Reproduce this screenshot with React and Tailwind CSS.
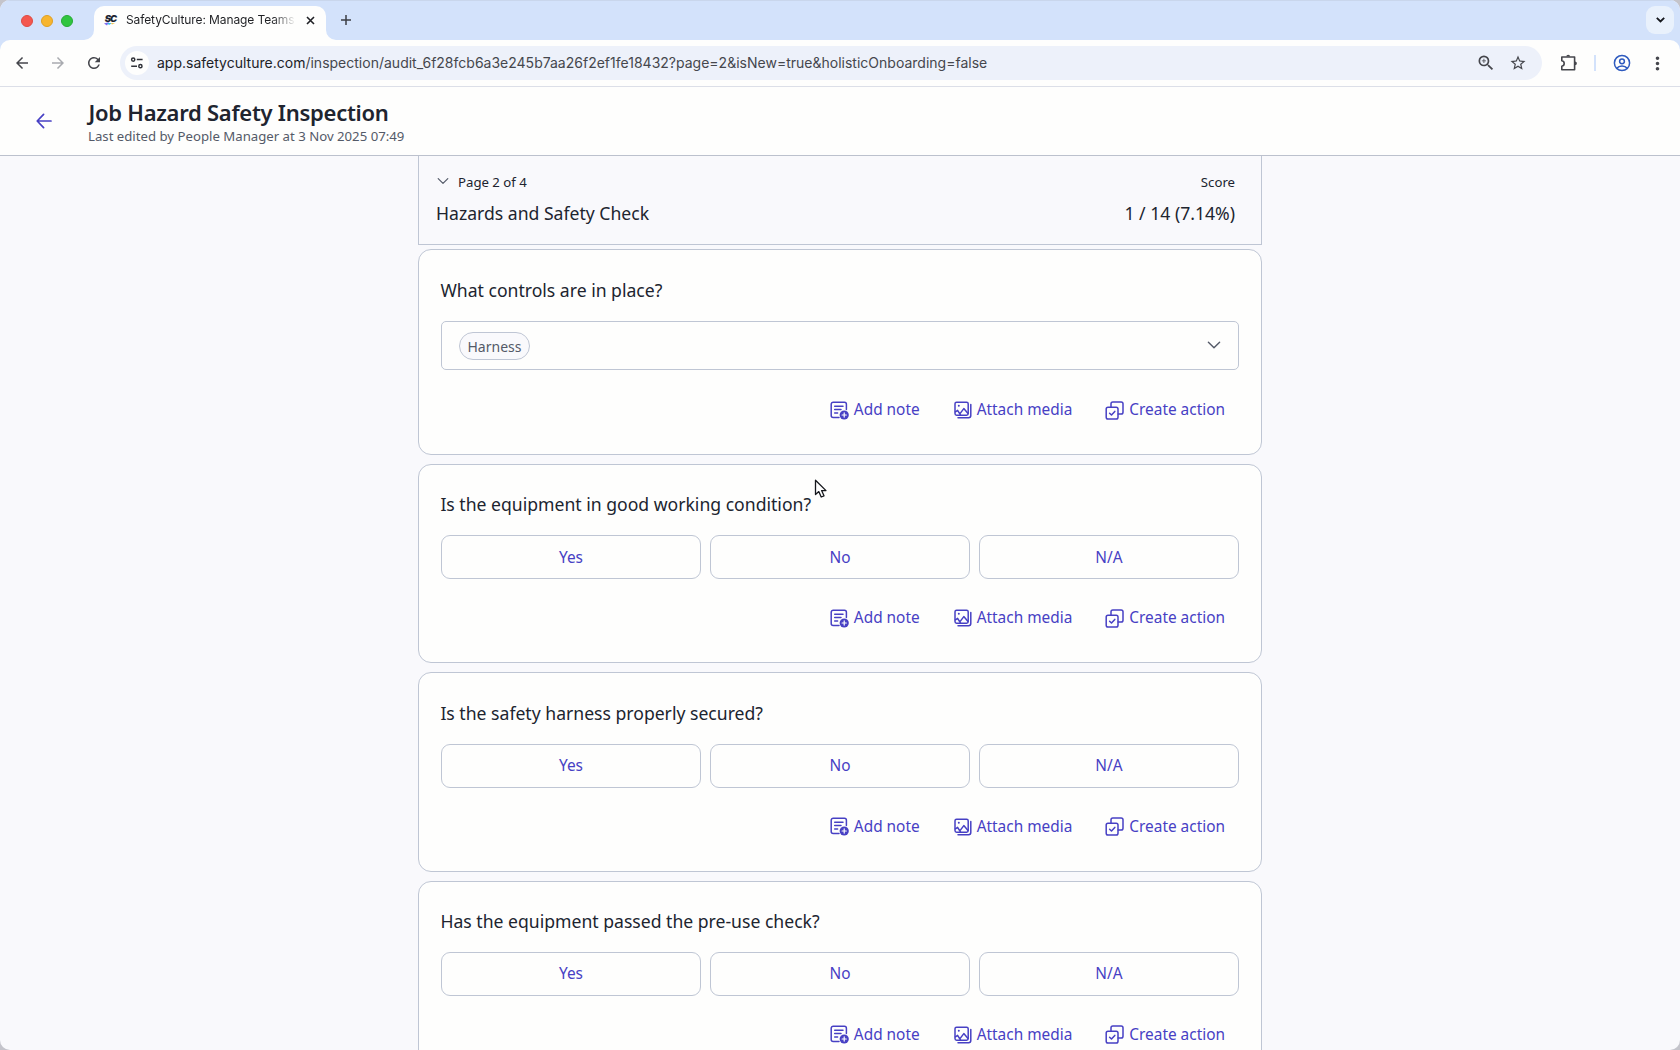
import { MdArrowBack, MdArrowForward, MdRefresh, MdZoomIn, MdStarBorder, MdMoreVert } from "react-icons/md";

const questions = [
  { title: "Is the equipment in good working condition?" },
  { title: "Is the safety harness properly secured?" },
  { title: "Has the equipment passed the pre-use check?" },
];

const TuneIcon = () => (
  <svg className="w-3.5 h-3.5" viewBox="0 0 14 14" fill="none" stroke="#303238" strokeWidth="1.5">
    <circle cx="3.2" cy="3.6" r="1.6" />
    <path d="M6.8 3.6H12.6M1.2 10.2H7" />
    <circle cx="10.4" cy="10.2" r="1.6" />
  </svg>
);

const PuzzleIcon = () => (
  <svg className="w-[18px] h-[18px]" viewBox="0 0 18 18" fill="none">
    <path
      d="M1.8 3H14.6V15.7H1.8V12.2C3.2 12 4.2 10.9 4.2 9.5C4.2 8.1 3.2 7 1.8 6.8Z"
      stroke="#45464c"
      strokeWidth="1.6"
      strokeLinejoin="round"
    />
    <path d="M6.3 2.6a1.9 1.9 0 0 1 3.8 0zM15 7.4a1.9 1.9 0 0 1 0 3.8z" fill="#45464c" />
  </svg>
);

const ProfileIcon = () => (
  <svg className="w-[18px] h-[18px]" viewBox="0 0 18 18" fill="none" stroke="#2f5bbf" strokeWidth="1.5">
    <circle cx="9" cy="9" r="7.6" />
    <circle cx="9" cy="7.3" r="2.4" />
    <path d="M3.8 14.2C5 12.6 6.9 11.9 9 11.9s4 .7 5.2 2.3" />
  </svg>
);

const NoteIcon = () => (
  <svg className="w-[19px] h-[19px]" viewBox="0 0 19 19" fill="none" stroke="currentColor" strokeWidth="1.5" strokeLinecap="round">
    <path d="M9 16.4H3.2A2 2 0 0 1 1.2 14.4V3.2A2 2 0 0 1 3.2 1.2H14.4A2 2 0 0 1 16.4 3.2V8.6" />
    <path d="M4.7 5.2H13M4.7 8.6H11M4.7 12H7.6" />
    <circle cx="14.2" cy="14" r="4.6" fill="currentColor" stroke="none" />
    <path d="M14.2 11.9V16.1M12.1 14H16.3" stroke="#fefefd" strokeWidth="1.2" />
  </svg>
);

const MediaIcon = () => (
  <svg className="w-[18px] h-[18px]" viewBox="0 0 18 18" fill="none" stroke="currentColor" strokeWidth="1.5" strokeLinecap="round" strokeLinejoin="round">
    <rect x="1" y="1.2" width="13.2" height="13" rx="1.6" />
    <path d="M1.4 10.8L3.6 9.4L6.4 13.8M6.2 12.4L9.8 7.6L14 12.4" />
    <circle cx="4.8" cy="4.8" r="1" fill="currentColor" stroke="none" />
    <path d="M16.8 3.4V14.6A2.2 2.2 0 0 1 14.6 16.8H4" />
  </svg>
);

const ActionIcon = () => (
  <svg className="w-[19px] h-[19px]" viewBox="0 0 19 19" fill="none" stroke="currentColor" strokeWidth="1.5" strokeLinecap="round" strokeLinejoin="round">
    <rect x="1.2" y="6.2" width="11.8" height="11.8" rx="1.8" />
    <path d="M6 6V2.8A1.8 1.8 0 0 1 7.8 1H16.2A1.8 1.8 0 0 1 18 2.8V11.2A1.8 1.8 0 0 1 16.2 13H13.2" />
    <path d="M4.6 12.2L6.5 14L9.8 10.4" />
  </svg>
);

const Chevron = ({ className }) => (
  <svg className={className} viewBox="0 0 14 8" fill="none" stroke="currentColor" strokeWidth="1.4" strokeLinecap="round" strokeLinejoin="round">
    <path d="M1.4 1.2L7 6.8L12.6 1.2" />
  </svg>
);

const TabStrip = () => (
  <div className="flex h-10 bg-[#d3e2fb] border-t border-[#c9d6ec]">
    <div className="flex items-center gap-2 pl-[21px] w-[94px]">
      <span className="w-3 h-3 rounded-full bg-[#f4574f] border border-[#de4b44]" />
      <span className="w-3 h-3 rounded-full bg-[#f7b52f] border border-[#dfa023]" />
      <span className="w-3 h-3 rounded-full bg-[#30c540] border border-[#27ab35]" />
    </div>
    <div className="relative mt-[5px] h-[34px] w-[232px] bg-[#fefefd] rounded-t-[10px] flex items-center pl-[9px] pr-[9px] pb-[6px]">
      <svg className="absolute bottom-0 -left-[10px] w-[10px] h-[10px]" viewBox="0 0 10 10">
        <path d="M10 0V10H0A10 10 0 0 0 10 0Z" fill="#fefefd" />
      </svg>
      <svg className="absolute bottom-0 -right-[10px] w-[10px] h-[10px]" viewBox="0 0 10 10">
        <path d="M0 0V10H10A10 10 0 0 1 0 0Z" fill="#fefefd" />
      </svg>
      <span className="relative w-[15px] h-[14px] shrink-0 flex items-center justify-center">
        <svg className="absolute inset-0 w-[15px] h-[14px]" viewBox="0 0 15 14">
          <path d="M1 10.5L6 9L4 12.5Z" fill="#7d6bf0" />
          <path d="M4 10H9L6 12Z" fill="#36bfe8" />
          <path d="M8 10H12L9 11.6Z" fill="#f3c552" />
        </svg>
        <span className="relative -mt-0.5 text-[9.5px] leading-none font-black italic tracking-[-1px] text-[#1f2533] font-['Inter',sans-serif]">SC</span>
      </span>
      <span className="ml-[8px] w-[170px] shrink-0 whitespace-nowrap text-[12px] leading-4 tracking-[-0.1px] text-[#1f2024] font-['Inter',sans-serif] [mask-image:linear-gradient(to_right,black_86%,transparent_100%)]">
        SafetyCulture: Manage Teams
      </span>
      <svg className="ml-auto mr-[2.5px] w-[9px] h-[9px]" viewBox="0 0 9 9" stroke="#202126" strokeWidth="1.6">
        <path d="M1 1L8 8M8 1L1 8" />
      </svg>
    </div>
    <svg className="ml-[15px] mt-[14px] w-[10px] h-[10px]" viewBox="0 0 10 10" stroke="#3c3e44" strokeWidth="1.5">
      <path d="M5 0V10M0 5H10" />
    </svg>
    <div className="ml-auto mr-[6px] mt-[5px] w-7 h-7 rounded-[9px] bg-[#e9f1fc] flex items-center justify-center">
      <svg className="w-[9px] h-[6px]" viewBox="0 0 9 6" fill="none" stroke="#15171c" strokeWidth="1.8">
        <path d="M0.8 0.8L4.5 4.5L8.2 0.8" />
      </svg>
    </div>
  </div>
);

const Toolbar = () => (
  <div className="bg-[#d3e2fb]">
    <div className="flex items-center h-[47px] bg-[#fefefd] rounded-t-[10px] border-b border-[#dcdfe8]">
      <MdArrowBack className="ml-[13px] w-[18px] h-[18px] text-[#45464c]" />
      <MdArrowForward className="ml-[18px] w-[18px] h-[18px] text-[#a9abb0]" />
      <MdRefresh className="ml-[18px] w-[18px] h-[18px] text-[#45464c]" />
      <div className="ml-[17px] w-[1422px] h-[34px] rounded-full bg-[#edf1fa] flex items-center pl-[5px] pr-[15px]">
        <span className="w-6 h-6 rounded-full bg-[#fefefd] flex items-center justify-center">
          <TuneIcon />
        </span>
        <span className="ml-2 whitespace-nowrap text-[14px] leading-5 tracking-[0.005px] text-[#45474d] font-['Inter',sans-serif]">
          <span className="text-[#202126]">app.safetyculture.com</span>
          /inspection/audit_6f28fcb6a3e245b7aa26f2ef1fe18432?page=2&amp;isNew=true&amp;holisticOnboarding=false
        </span>
        <MdZoomIn className="ml-auto w-5 h-5 text-[#45464c]" />
        <MdStarBorder className="ml-[13px] w-[18px] h-[18px] text-[#45464c]" />
      </div>
      <span className="ml-[18px]"><PuzzleIcon /></span>
      <span className="ml-[16px] w-[2px] h-4 bg-[#d3e2fb]" />
      <span className="ml-[17px]"><ProfileIcon /></span>
      <MdMoreVert className="ml-[16px] w-[21px] h-[21px] text-[#45464c]" />
    </div>
  </div>
);

const PageHeader = () => (
  <div className="flex h-[69px] bg-[#fefefd] border-b border-[#bcc1cd]">
    <svg className="ml-[36px] mt-[26px] w-4 h-4" viewBox="0 0 16 16" fill="none" stroke="#4740c4" strokeWidth="1.7" strokeLinecap="round" strokeLinejoin="round">
      <path d="M15 8H1.4M7.6 1.4L1.2 8L7.6 14.6" />
    </svg>
    <div className="ml-[36px] pt-[11px]">
      <h1 className="ml-[0.5px] text-[22px] leading-7 font-semibold tracking-[-0.27px] text-[#20242f] whitespace-nowrap">Job Hazard Safety Inspection</h1>
      <p className="mt-px text-[13.2px] leading-[18px] text-[#545a68] whitespace-nowrap">Last edited by People Manager at 3 Nov 2025 07:49</p>
    </div>
  </div>
);

const Actions = () => (
  <div className="flex items-center h-6 pr-[14px] justify-end text-[15.4px] leading-6 text-[#4740c4]">
    <button className="flex items-center gap-[5px]">
      <NoteIcon />
      Add note
    </button>
    <button className="ml-[34px] flex items-center gap-[5px]">
      <MediaIcon />
      Attach media
    </button>
    <button className="ml-[33px] flex items-center gap-[5px]">
      <ActionIcon />
      Create action
    </button>
  </div>
);

const Card = ({ title, className, children }) => (
  <div className={`shrink-0 px-[22px] bg-[#fefefd] border border-[#bfc6d4] rounded-[13px] ${className}`}>
    <h3 className="-ml-[0.6px] text-[17.6px] leading-7 text-[#20242f]">{title}</h3>
    {children}
  </div>
);

export default function App() {
  return (
    <div className="w-[1680px] h-[1050px] overflow-hidden bg-[#c4c4cb] font-['Noto_Sans',sans-serif]">
      <div className="flex flex-col h-full overflow-hidden rounded-[10px] bg-[#f9f9fc]">
        <TabStrip />
        <Toolbar />
        <PageHeader />
        <main className="relative flex flex-col flex-1 min-h-0 w-[844px] mx-auto">
          <section className="flex justify-between h-[89px] shrink-0 pl-[17px] pr-[26px] pt-[15px] border-x border-b border-[#bfc6d4] text-[#20242f]">
            <div>
              <div className="flex items-center h-[22px] text-[13.2px] leading-[22px]">
                <Chevron className="ml-[1px] mr-[9px] mb-[3px] w-[12px] h-[8px] text-[#545a68]" />
                Page 2 of 4
              </div>
              <h2 className="mt-[6px] text-[17.6px] leading-7">Hazards and Safety Check</h2>
            </div>
            <div className="text-right">
              <div className="text-[13.2px] leading-[22px]">Score</div>
              <div className="mt-[6px] text-[17.6px] leading-7">1 / 14 (7.14%)</div>
            </div>
          </section>

          <Card title="What controls are in place?" className="mt-1 h-[205.8px] pt-[26px]">
            <div className="mt-[17px] mb-[28px] h-[49px] flex items-center justify-between pl-[17px] pr-[17px] border border-[#bfc6d4] rounded-[5px]">
              <span className="h-7 px-[7.5px] pt-px flex items-center rounded-full border border-[#bfc6d4] bg-[#f9f9fc] text-[14px] text-[#545a68]">
                Harness
              </span>
              <Chevron className="w-[14px] h-[8px] -mt-px text-[#545a68]" />
            </div>
            <Actions />
          </Card>

          {questions.map((q) => (
            <Card key={q.title} title={q.title} className="mt-[9.2px] h-[199.2px] pt-[25.2px]">
              <div className="mt-[17px] mb-[27px] grid grid-cols-3 gap-[9px]">
                {["Yes", "No", "N/A"].map((answer) => (
                  <button key={answer} className="h-11 border border-[#bfc6d4] rounded-[9px] text-[15.4px] text-[#4740c4]">
                    {answer}
                  </button>
                ))}
              </div>
              <Actions />
            </Card>
          ))}

          {/* cursor */}
          <svg className="absolute left-[396px] top-[323px] w-[14px] h-[20px]" viewBox="0 0 14 20">
            <path d="M1.5 1.2V15.6L4.8 12.6L7.2 18L10 16.8L7.6 11.6H12Z" fill="#fff" stroke="#15171c" strokeWidth="1.3" strokeLinejoin="round" />
          </svg>
        </main>
      </div>
    </div>
  );
}
